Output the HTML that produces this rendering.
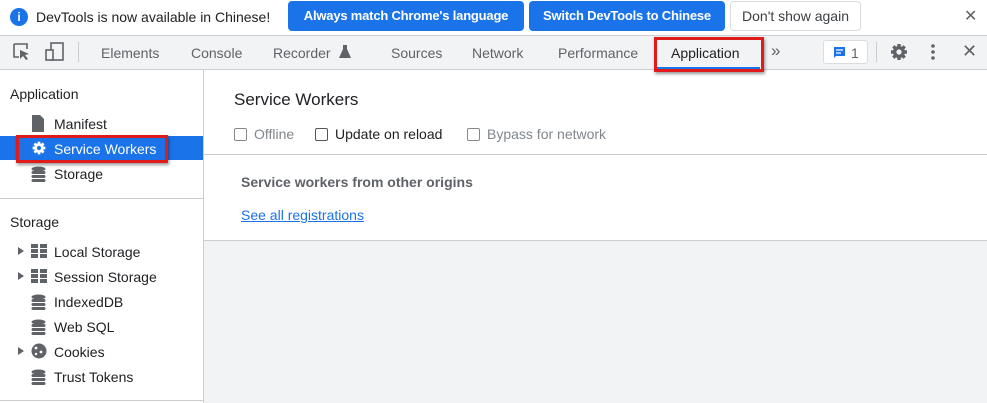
<!DOCTYPE html>
<html><head><style>
*{box-sizing:border-box;margin:0;padding:0}
body{width:987px;height:403px;overflow:hidden;background:#fff;font-family:"Liberation Sans",sans-serif;font-size:14px;color:#202124;position:relative}
.a{position:absolute;white-space:nowrap}
.btn{position:absolute;top:1px;height:30px;border-radius:4px;background:#1a73e8;color:#fff;font-weight:bold;font-size:13px;letter-spacing:-0.2px;line-height:30px;text-align:center;overflow:hidden}
.tab{position:absolute;top:45px;color:#5f6368;font-size:14px}
.si{position:absolute;left:54px;font-size:14px;color:#202124}
.ic{position:absolute;left:31px}
.tri{position:absolute;left:18px;width:0;height:0;border-left:6px solid #5f6368;border-top:4px solid transparent;border-bottom:4px solid transparent}
.cb{display:inline-block;width:13px;height:13px;border:1px solid #555;border-radius:2px;vertical-align:-2px;margin-right:7px}
</style></head><body>
<!-- infobar -->
<div class="a" style="left:10px;top:8px;width:18px;height:18px;border-radius:50%;background:#1a73e8;color:#fff;font-weight:bold;font-size:12px;text-align:center;line-height:18px">i</div>
<div class="a" style="left:36px;top:9px;font-size:14px">DevTools is now available in Chinese!</div>
<div class="btn" style="left:288px;width:236px">Always match Chrome's language</div>
<div class="btn" style="left:529px;width:196px">Switch DevTools to Chinese</div>
<div class="a" style="left:730px;top:1px;width:131px;height:30px;border:1px solid #dadce0;border-radius:4px;line-height:28px;text-align:center;color:#3c4043">Don't show again</div>
<div class="a" style="left:964px;top:6px;font-size:16px;color:#5f6368">✕</div>
<!-- toolbar -->
<div class="a" style="left:0;top:35px;width:987px;height:35px;background:#f1f3f4;border-top:1px solid #cbcdd1;border-bottom:1px solid #cbcdd1"></div>
<svg class="a" style="left:12px;top:42px" width="20" height="20" viewBox="0 0 20 20"><path d="M2 2h13v5M2 2v13h5" fill="none" stroke="#5f6368" stroke-width="1.6"/><path d="M8 8l9 4-4 1 3 4-2 1-3-4-3 3z" fill="#5f6368"/></svg>
<svg class="a" style="left:44px;top:41px" width="22" height="22" viewBox="0 0 22 22"><rect x="7" y="2" width="12" height="17" fill="none" stroke="#5f6368" stroke-width="1.6"/><rect x="2" y="9" width="7" height="10" fill="#f1f3f4" stroke="#5f6368" stroke-width="1.6"/></svg>
<div class="a" style="left:78px;top:42px;width:1px;height:20px;background:#ccc"></div>
<div class="tab" style="left:101px">Elements</div>
<div class="tab" style="left:191px">Console</div>
<div class="tab" style="left:273px">Recorder</div>
<svg class="a" style="left:339px;top:45px" width="12" height="13" viewBox="0 0 12 13"><path d="M4 0h4v4l4 9H0l4-9z" fill="#5f6368"/></svg>
<div class="tab" style="left:391px">Sources</div>
<div class="tab" style="left:472px">Network</div>
<div class="tab" style="left:558px">Performance</div>
<div class="a" style="left:656px;top:67px;width:104px;height:3px;background:#1a73e8"></div>
<div class="a" style="left:654px;top:37px;width:110px;height:35px;border:3px solid #e01b1b;box-shadow:1px 2px 3px rgba(0,0,0,.4)"></div>
<div class="tab" style="left:671px;color:#202124">Application</div>
<div class="tab" style="left:771px;top:41px;font-size:17px">»</div>
<div class="a" style="left:823px;top:40px;width:45px;height:24px;border:1px solid #dadce0;border-radius:3px;background:#fff"></div>
<svg class="a" style="left:833px;top:46px" width="13" height="13" viewBox="0 0 13 13"><path d="M1 1h11v9H3l-2 2z" fill="#1a73e8"/><path d="M3 4h7M3 7h5" stroke="#fff" stroke-width="1.2"/></svg>
<div class="a" style="left:851px;top:45px;color:#5f6368">1</div>
<div class="a" style="left:876px;top:42px;width:1px;height:20px;background:#ccc"></div>
<svg class="a" style="left:889px;top:42px" width="20" height="20" viewBox="0 0 20 20"><g fill="#5f6368"><circle cx="10" cy="10" r="6"/><g stroke="#5f6368" stroke-width="3.4"><path d="M10 2v16M2 10h16M4.3 4.3l11.4 11.4M15.7 4.3L4.3 15.7"/></g></g><circle cx="10" cy="10" r="2.6" fill="#f1f3f4"/></svg>
<svg class="a" style="left:930px;top:43px" width="6" height="18"><circle cx="3" cy="3" r="1.8" fill="#5f6368"/><circle cx="3" cy="9" r="1.8" fill="#5f6368"/><circle cx="3" cy="15" r="1.8" fill="#5f6368"/></svg>
<div class="a" style="left:962px;top:41px;font-size:18px;color:#5f6368">✕</div>
<!-- sidebar -->
<div class="a" style="left:203px;top:70px;width:1px;height:333px;background:#cbcdd1"></div>
<div class="a" style="left:10px;top:86px;font-size:14px">Application</div>
<svg class="ic" style="top:115px" width="14" height="17"><path d="M1 0h8l4 4v13H1z" fill="#5f6368"/></svg>
<div class="si" style="top:116px">Manifest</div>
<div class="a" style="left:0;top:136px;width:203px;height:24px;background:#1a73e8"></div>
<div class="a" style="left:16px;top:135px;width:152px;height:28px;border:3px solid #e01b1b;box-shadow:1px 2px 3px rgba(0,0,0,.4)"></div>
<svg class="ic" style="top:140px" width="16" height="16" viewBox="0 0 20 20"><g stroke="#fff" stroke-width="3.4"><path d="M10 2v16M2 10h16M4.3 4.3l11.4 11.4M15.7 4.3L4.3 15.7"/></g><circle cx="10" cy="10" r="6" fill="#fff"/><circle cx="10" cy="10" r="2.6" fill="#1a73e8"/></svg>
<div class="si" style="top:141px;color:#fff">Service Workers</div>
<svg class="ic" style="top:166px" width="15" height="16"><g fill="#5f6368"><ellipse cx="7.5" cy="3" rx="7" ry="2.5"/><rect x="0.5" y="5" width="14" height="3" rx="1.5"/><rect x="0.5" y="9" width="14" height="3" rx="1.5"/><rect x="0.5" y="13" width="14" height="3" rx="1.5"/></g></svg>
<div class="si" style="top:166px">Storage</div>
<div class="a" style="left:0;top:198px;width:203px;height:1px;background:#cbcdd1"></div>
<div class="a" style="left:10px;top:214px">Storage</div>
<div class="tri" style="top:247px"></div>
<svg class="ic" style="top:244px" width="16" height="14"><g fill="#5f6368"><rect x="0" y="0" width="7" height="4"/><rect x="9" y="0" width="7" height="4"/><rect x="0" y="5" width="7" height="4"/><rect x="9" y="5" width="7" height="4"/><rect x="0" y="10" width="7" height="4"/><rect x="9" y="10" width="7" height="4"/></g></svg>
<div class="si" style="top:244px">Local Storage</div>
<div class="tri" style="top:272px"></div>
<svg class="ic" style="top:269px" width="16" height="14"><g fill="#5f6368"><rect x="0" y="0" width="7" height="4"/><rect x="9" y="0" width="7" height="4"/><rect x="0" y="5" width="7" height="4"/><rect x="9" y="5" width="7" height="4"/><rect x="0" y="10" width="7" height="4"/><rect x="9" y="10" width="7" height="4"/></g></svg>
<div class="si" style="top:269px">Session Storage</div>
<svg class="ic" style="top:294px" width="15" height="16"><g fill="#5f6368"><ellipse cx="7.5" cy="3" rx="7" ry="2.5"/><rect x="0.5" y="5" width="14" height="3" rx="1.5"/><rect x="0.5" y="9" width="14" height="3" rx="1.5"/><rect x="0.5" y="13" width="14" height="3" rx="1.5"/></g></svg>
<div class="si" style="top:294px">IndexedDB</div>
<svg class="ic" style="top:319px" width="15" height="16"><g fill="#5f6368"><ellipse cx="7.5" cy="3" rx="7" ry="2.5"/><rect x="0.5" y="5" width="14" height="3" rx="1.5"/><rect x="0.5" y="9" width="14" height="3" rx="1.5"/><rect x="0.5" y="13" width="14" height="3" rx="1.5"/></g></svg>
<div class="si" style="top:319px">Web SQL</div>
<div class="tri" style="top:347px"></div>
<svg class="ic" style="top:343px" width="16" height="16"><circle cx="8" cy="8" r="7.5" fill="#5f6368"/><circle cx="5" cy="5" r="1.4" fill="#fff"/><circle cx="10" cy="9" r="1.4" fill="#fff"/><circle cx="5" cy="11" r="1.2" fill="#fff"/></svg>
<div class="si" style="top:344px">Cookies</div>
<svg class="ic" style="top:369px" width="15" height="16"><g fill="#5f6368"><ellipse cx="7.5" cy="3" rx="7" ry="2.5"/><rect x="0.5" y="5" width="14" height="3" rx="1.5"/><rect x="0.5" y="9" width="14" height="3" rx="1.5"/><rect x="0.5" y="13" width="14" height="3" rx="1.5"/></g></svg>
<div class="si" style="top:369px">Trust Tokens</div>
<div class="a" style="left:0;top:400px;width:203px;height:1px;background:#cbcdd1"></div>
<!-- main -->
<div class="a" style="left:234px;top:90px;font-size:17px">Service Workers</div>
<div class="a" style="left:234px;top:126px;color:#80868b"><span class="cb" style="border-color:#888"></span>Offline</div>
<div class="a" style="left:315px;top:126px"><span class="cb"></span>Update on reload</div>
<div class="a" style="left:467px;top:126px;color:#80868b"><span class="cb" style="border-color:#888"></span>Bypass for network</div>
<div class="a" style="left:204px;top:154px;width:783px;height:1px;background:#cbcdd1"></div>
<div class="a" style="left:241px;top:174px;font-weight:bold;color:#5f6368">Service workers from other origins</div>
<div class="a" style="left:241px;top:207px;color:#1a73e8;text-decoration:underline">See all registrations</div>
<div class="a" style="left:204px;top:240px;width:783px;height:163px;background:#f1f3f4;border-top:1px solid #cbcdd1"></div>
</body></html>
